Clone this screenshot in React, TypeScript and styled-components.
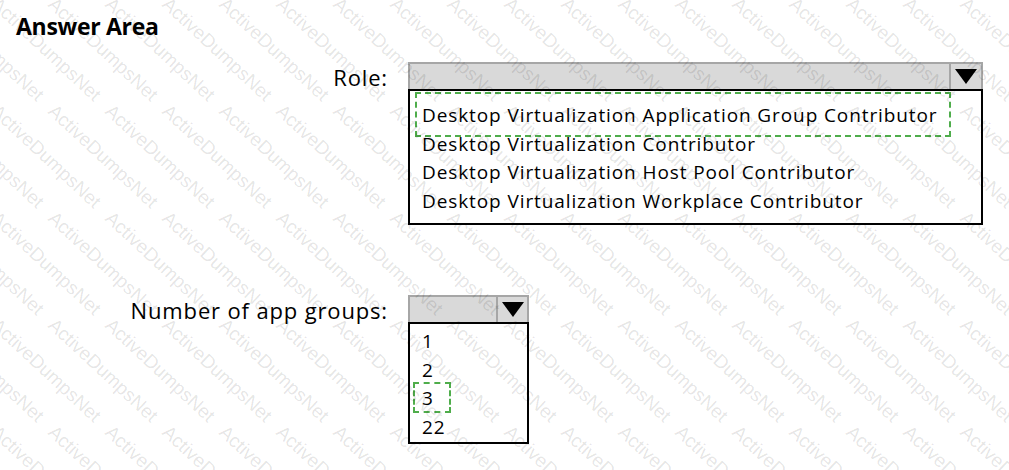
import React from "react";
import styled, { createGlobalStyle } from "styled-components";

const GlobalStyle = createGlobalStyle`
  html, body {
    margin: 0;
    padding: 0;
    background: #ffffff;
  }
  body {
    font-family: "Open Sans", "Noto Sans", sans-serif;
    color: #000000;
  }
`;

const Page = styled.main`
  width: 1009px;
  height: 470px;
  position: relative;
  overflow: hidden;
  background: #ffffff;
`;

const Watermark = styled.div`
  position: absolute;
  top: -6px;
  left: -56px;
  pointer-events: none;
  display: grid;
  grid-template-columns: repeat(19, 57px);
  grid-auto-rows: 107px;
  z-index: 2;
`;

const Mark = styled.span`
  display: block;
  width: 0;
  white-space: nowrap;
  transform: rotate(43deg);
  transform-origin: 0 0;
  font-family: "Liberation Sans", sans-serif;
  font-size: 19px;
  line-height: 19px;
  color: rgba(0, 0, 0, 0.11);
`;

const Title = styled.h1`
  margin: 0;
  padding: 11px 0 0 16px;
  font-family: "Open Sans", sans-serif;
  font-weight: 700;
  font-size: 23px;
  line-height: 30px;
  letter-spacing: -0.3px;
`;

const Rows = styled.div`
  display: flex;
  flex-direction: column;
  gap: 70px;
  margin-top: 21px;
`;

const Row = styled.div`
  display: grid;
  grid-template-columns: 387px auto;
  column-gap: 21px;
  align-items: start;
`;

const Label = styled.div`
  text-align: right;
  font-size: 22px;
  line-height: 30px;
  letter-spacing: 0.85px;
  margin-right: -1px;
`;

const Dropdown = styled.div<{ $width: number }>`
  width: ${(p) => p.$width}px;
  display: flex;
  flex-direction: column;
`;

const Header = styled.div<{ $arrowWidth: number }>`
  height: 27px;
  box-sizing: border-box;
  background: #d9d9d9;
  border: 2px solid #a6a6a6;
  border-bottom: none;
  display: grid;
  grid-template-columns: 1fr ${(p) => p.$arrowWidth}px;
`;

const ArrowCell = styled.div`
  border-left: 2px solid #a6a6a6;
  display: flex;
  align-items: center;
  justify-content: center;
`;

const List = styled.ul<{ $height: number; $padTop: number }>`
  list-style: none;
  margin: 0;
  height: ${(p) => p.$height}px;
  box-sizing: border-box;
  border: 2px solid #000000;
  padding: ${(p) => p.$padTop}px 0 0 12px;
`;

const Item = styled.li`
  font-size: 19px;
  line-height: 28.6px;
  letter-spacing: 0.9px;
  white-space: nowrap;
`;

const Highlight = styled.span<{ $t: number; $r: number; $b: number; $l: number }>`
  position: relative;
  display: inline-block;
  &::after {
    content: "";
    position: absolute;
    top: ${(p) => -p.$t}px;
    right: ${(p) => -p.$r}px;
    bottom: ${(p) => -p.$b}px;
    left: ${(p) => -p.$l}px;
    border: 2px dashed #4fad4b;
  }
`;

const Triangle = () => (
  <svg width={22} height={15} viewBox="0 0 22 15">
    <polygon points="0,0 22,0 11,15" fill="#000" />
  </svg>
);

const roles = [
  "Desktop Virtualization Application Group Contributor",
  "Desktop Virtualization Contributor",
  "Desktop Virtualization Host Pool Contributor",
  "Desktop Virtualization Workplace Contributor",
];

const counts = ["1", "2", "3", "22"];

export default function App() {
  const marks = Array.from({ length: 19 * 5 }, (_, i) => i);
  return (
    <>
      <GlobalStyle />
      <Page>
        <Title>Answer Area</Title>
        <Rows>
          <Row>
            <Label>Role:</Label>
            <Dropdown $width={575}>
              <Header $arrowWidth={32}>
                <div />
                <ArrowCell>
                  <Triangle />
                </ArrowCell>
              </Header>
              <List $height={136} $padTop={10}>
                {roles.map((r, i) => (
                  <Item key={r}>
                    {i === 0 ? (
                      <Highlight $t={9} $r={13} $b={7} $l={7}>
                        {r}
                      </Highlight>
                    ) : (
                      r
                    )}
                  </Item>
                ))}
              </List>
            </Dropdown>
          </Row>
          <Row>
            <Label>Number of app groups:</Label>
            <Dropdown $width={121}>
              <Header $arrowWidth={31}>
                <div />
                <ArrowCell>
                  <Triangle />
                </ArrowCell>
              </Header>
              <List $height={122} $padTop={3}>
                {counts.map((c) => (
                  <Item key={c}>
                    {c === "3" ? (
                      <Highlight $t={2} $r={17} $b={0} $l={9}>
                        {c}
                      </Highlight>
                    ) : (
                      c
                    )}
                  </Item>
                ))}
              </List>
            </Dropdown>
          </Row>
        </Rows>
        <Watermark>
          {marks.map((i) => (
            <Mark key={i}>ActiveDumpsNet</Mark>
          ))}
        </Watermark>
      </Page>
    </>
  );
}
